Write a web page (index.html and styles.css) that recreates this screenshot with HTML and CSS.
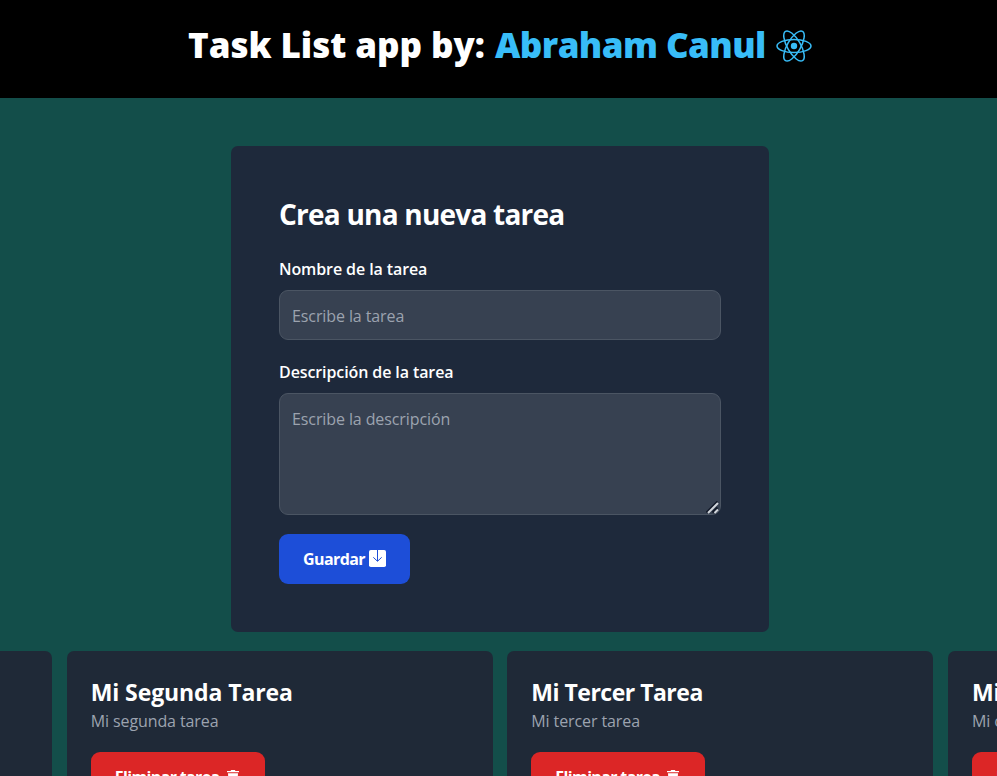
FILE: index.html
```html
<!DOCTYPE html>
<html lang="es">
<head>
<meta charset="utf-8">
<title>Task List</title>
<link rel="stylesheet" href="styles.css">
</head>
<body>
<header class="header">
  <h1 class="brand"><span class="brand-text">Task List app by:</span><span class="author">Abraham Canul</span>
    <svg class="react" viewBox="-18 -17 36 34"><g fill="none" stroke="#38bdf8" stroke-width="1.5"><ellipse rx="17" ry="6.6"/><ellipse rx="17" ry="6.6" transform="rotate(60)"/><ellipse rx="17" ry="6.6" transform="rotate(120)"/></g><circle r="3.2" fill="#38bdf8"/></svg>
  </h1>
</header>
<main>
  <form class="form">
    <h2 class="form-title"><span>Crea una nueva tarea</span></h2>
    <label class="label label-name" for="name"><span>Nombre de la tarea</span></label>
    <input class="field name" id="name" placeholder="Escribe la tarea">
    <label class="label label-desc" for="desc"><span>Descripción de la tarea</span></label>
    <div class="area-wrap">
      <textarea class="field area" id="desc" placeholder="Escribe la descripción"></textarea>
      <svg class="grip" viewBox="0 0 13 13"><g fill="none" stroke-width="2"><path d="M.5 11.500L11.500.5M6.500 11.500L11.500 6.500" stroke="#111827"/><path d="M2 12L12 2M8.500 12L12 8.500" stroke="#d1d5db"/></g></svg>
    </div>
    <button class="btn save" type="button"><span>Guardar</span>
      <svg class="save-icon" viewBox="0 0 17 17"><rect width="17" height="17" rx="1.8" fill="#fff"/><path d="M8.500 0v11M4.300 7.300l4.200 4 4.200-4" fill="none" stroke="#1d4ed8" stroke-width="1"/></svg>
    </button>
  </form>
  <section class="tasks">
    <article class="card"><h3>Mi Primera Tarea</h3><p>Mi primera tarea</p><button class="btn delete" type="button"><span>Eliminar tarea</span><svg class="trash" viewBox="0 0 12 15"><path d="M0 1h3.500l.7-1h3.600l.7 1H12v1.300H0zM1 3.200h10L10.300 15H1.700z" fill="#fff"/></svg></button></article>
    <article class="card"><h3>Mi Segunda Tarea</h3><p>Mi segunda tarea</p><button class="btn delete" type="button"><span>Eliminar tarea</span><svg class="trash" viewBox="0 0 12 15"><path d="M0 1h3.500l.7-1h3.600l.7 1H12v1.300H0zM1 3.200h10L10.300 15H1.700z" fill="#fff"/></svg></button></article>
    <article class="card"><h3 class="third">Mi Tercer Tarea</h3><p>Mi tercer tarea</p><button class="btn delete" type="button"><span>Eliminar tarea</span><svg class="trash" viewBox="0 0 12 15"><path d="M0 1h3.500l.7-1h3.600l.7 1H12v1.300H0zM1 3.200h10L10.300 15H1.700z" fill="#fff"/></svg></button></article>
    <article class="card"><h3>Mi Cuarta Tarea</h3><p>Mi cuarta tarea</p><button class="btn delete" type="button"><span>Eliminar tarea</span><svg class="trash" viewBox="0 0 12 15"><path d="M0 1h3.500l.7-1h3.600l.7 1H12v1.300H0zM1 3.200h10L10.300 15H1.700z" fill="#fff"/></svg></button></article>
  </section>
</main>
</body>
</html>
```
FILE: styles.css
```css
* { box-sizing: border-box; margin: 0; }
body { height: 776px; overflow: hidden; background: #134e4a; color: #fff; font-family: "Open Sans", "Noto Sans", sans-serif; font-size: 16px; }
.header { height: 98px; background: #000; padding: 22px 0 0 188px; }
.brand { display: flex; height: 45px; align-items: center; font-size: 35px; line-height: 44px; font-weight: 800; white-space: nowrap; letter-spacing: -.57px; }
.brand-text { width: 307px; letter-spacing: -.05px; }
.author { width: 281px; color: #38bdf8; }
.react { width: 36px; height: 34px; margin-top: 2px; }
.form { width: 538px; height: 486px; margin: 48px 0 0 231px; padding: 48px; background: #1e293b; border-radius: 7px; display: flex; flex-direction: column; align-items: flex-start; }
.form-title { font-size: 28px; line-height: 41px; font-weight: 700; letter-spacing: -.78px; white-space: nowrap; }
.label { font-size: 16px; line-height: 24px; font-weight: 600; letter-spacing: -.1px; }
.label-name { margin: 22px 0 9px; }
.label-desc { margin: 20px 0 9px; }
.field { display: block; width: 442px; height: 50px; padding: 12px; border: 1px solid #4b5563; border-radius: 9px; background: #374151; color: #fff; font: inherit; line-height: 26px; letter-spacing: -.1px; }
.field::placeholder { color: #9ca3af; opacity: 1; }
.name { padding: 13px 12px 11px; }
.area-wrap { position: relative; }
.area { height: 122px; resize: none; }
.grip { position: absolute; right: 2px; bottom: 1px; width: 13px; height: 13px; pointer-events: none; }
.btn { display: flex; align-items: center; height: 50px; padding: 0 24px; border: 0; border-radius: 9px; color: #fff; font: 700 16px/24px "Open Sans", sans-serif; white-space: nowrap; }
.save { width: 131px; margin-top: 19px; background: #1d4ed8; }
.save span { width: 66px; text-align: left; letter-spacing: -.6px; }
.save-icon { width: 17px; height: 17px; flex: none; margin-bottom: 2px; }
.tasks { display: flex; justify-content: center; gap: 14.600px; margin: 19px 0 0 3px; }
.card { flex: none; width: 426px; height: 176px; padding: 24px; border-radius: 7px; background: #1f2937; }
.card h3 { font-size: 23px; line-height: 34px; font-weight: 700; white-space: nowrap; letter-spacing: -.1px; }
.card h3.third { letter-spacing: -.5px; }
.card p { color: #9ca3af; font-size: 16px; line-height: 24px; letter-spacing: -.1px; }
.delete { width: 174px; margin-top: 19px; background: #dc2626; }
.delete span { width: 112px; text-align: left; letter-spacing: -.65px; }
.trash { width: 12px; height: 15px; flex: none; }
```
